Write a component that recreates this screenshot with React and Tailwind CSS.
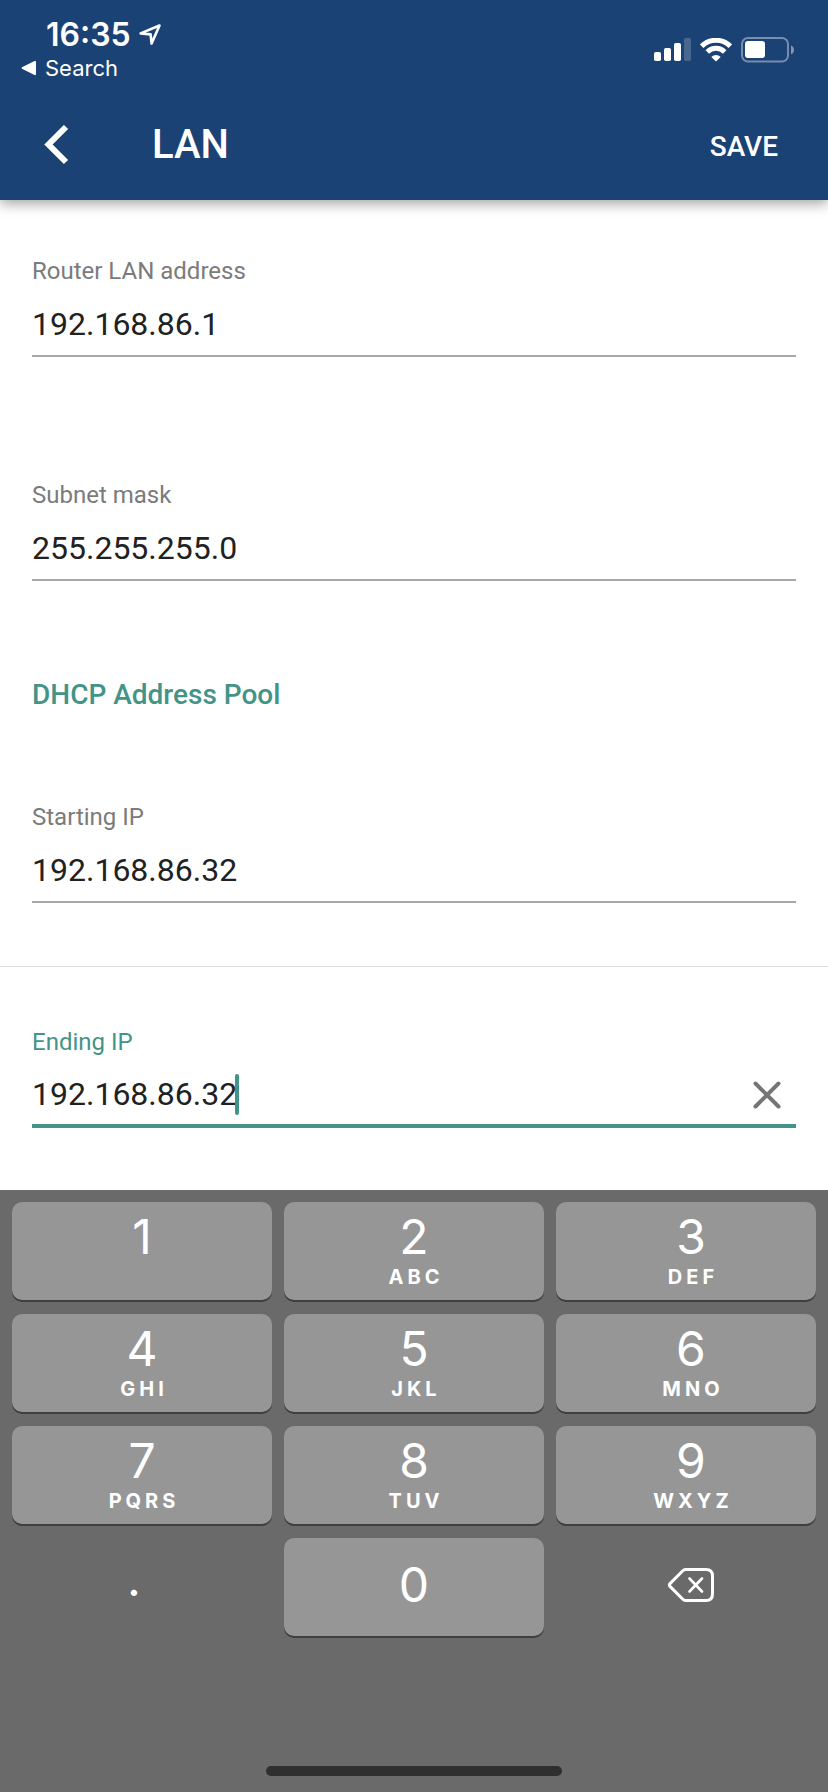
import React, { useState } from "react";

const keys = [
  { digit: "1", letters: "" },
  { digit: "2", letters: "ABC" },
  { digit: "3", letters: "DEF" },
  { digit: "4", letters: "GHI" },
  { digit: "5", letters: "JKL" },
  { digit: "6", letters: "MNO" },
  { digit: "7", letters: "PQRS" },
  { digit: "8", letters: "TUV" },
  { digit: "9", letters: "WXYZ" },
];

const LocationIcon = () => (
  <svg width="24" height="24" viewBox="0 0 24 24" fill="none">
    <path
      d="M21.5 2.5 L13.6 20.6 L12.6 11.4 L2.6 10.4 Z"
      stroke="white"
      strokeWidth="2.6"
      strokeLinejoin="round"
    />
  </svg>
);

const SignalIcon = () => (
  <svg width="37" height="24" viewBox="0 0 37 24" fill="white">
    <rect x="0" y="14" width="7" height="9" rx="1.8" />
    <rect x="10" y="10" width="7" height="13" rx="1.8" />
    <rect x="20" y="5" width="7" height="18" rx="1.8" />
    <rect x="30" y="0" width="7" height="23" rx="1.8" opacity="0.2" />
  </svg>
);

const WifiIcon = () => (
  <svg width="32" height="24" viewBox="0 0 32 24" fill="none">
    <path d="M1.6 8.2 A20.4 20.4 0 0 1 30.4 8.2" stroke="white" strokeWidth="5" />
    <path d="M7.3 13.9 A12.3 12.3 0 0 1 24.7 13.9" stroke="white" strokeWidth="5" />
    <path d="M16 23.6 L11.3 18.9 A6.7 6.7 0 0 1 20.7 18.9 Z" fill="white" />
  </svg>
);

const BatteryIcon = () => (
  <svg width="54" height="26" viewBox="0 0 54 26" fill="none">
    <rect x="1" y="1" width="46" height="23.6" rx="6" stroke="white" strokeOpacity="0.4" strokeWidth="2" />
    <path d="M50 8.4 C54 9.6 54 16 50 17.2 Z" fill="white" fillOpacity="0.45" />
    <rect x="4" y="4" width="20" height="17" rx="3" fill="white" />
  </svg>
);

const BackspaceIcon = () => (
  <svg width="48" height="36" viewBox="0 0 48 36" fill="none" stroke="white" strokeLinecap="round" strokeLinejoin="round">
    <path
      d="M18.5 2.5 H39 Q45.5 2.5 45.5 9 V27 Q45.5 33.5 39 33.5 H18.5 Q17 33.5 15.8 32.3 L3 19.4 Q1.8 18 3 16.6 L15.8 3.7 Q17 2.5 18.5 2.5 Z"
      strokeWidth="3"
    />
    <path d="M22.5 11.5 L35 24.5 M35 11.5 L22.5 24.5" strokeWidth="2.6" />
  </svg>
);

const Field = ({ id, label, value, onChange, active, onClear }) => {
  return (
    <div>
      <label
        htmlFor={id}
        className={
          active
            ? "block text-[24px] leading-7 text-[#439488]"
            : "block text-[24px] leading-7 text-[#7b7b7b]"
        }
      >
        {label}
      </label>
      <div
        className={
          active
            ? "relative mt-2 flex h-16 items-center border-b-4 border-[#439488]"
            : "relative mt-2 flex h-16 items-center border-b-2 border-[#a8a8a8]"
        }
      >
        <input
          id={id}
          type="text"
          inputMode="decimal"
          value={value}
          onChange={(e) => onChange(e.target.value)}
          className="h-10 w-full min-w-0 bg-transparent text-[32px] leading-10 text-[#212121] outline-none"
        />
        {active && (
          <>
            <span className="absolute left-[203px] h-[41px] w-1 rounded-sm bg-[#439488]" />
            <button type="button" aria-label="Clear" onClick={onClear} className="mr-[14px] shrink-0">
              <svg width="30" height="30" viewBox="0 0 30 30" stroke="#757575" strokeWidth="4" strokeLinecap="round">
                <path d="M3.5 4.5 L26.5 27.5 M26.5 4.5 L3.5 27.5" />
              </svg>
            </button>
          </>
        )}
      </div>
    </div>
  );
};

const Keyboard = ({ onKey, onDelete }) => {
  return (
    <div className="bg-[#6a6a6a] px-3 pt-3 pb-4 text-white font-['Inter',sans-serif]">
      <div className="grid grid-cols-3 gap-x-3 gap-y-[14px]">
        {keys.map((key) => (
          <button
            key={key.digit}
            type="button"
            onClick={() => onKey(key.digit)}
            className="flex h-[98px] flex-col items-center rounded-[10px] bg-[#969696] pt-[9px] shadow-[0_2px_0_#3f3f3f] nth-[3n]:pl-[10px]"
          >
            <span className="text-[48px] leading-[52px]">{key.digit}</span>
            <span className="pl-1 text-[20px] leading-7 font-bold tracking-[4px]">
              {key.letters}
            </span>
          </button>
        ))}
        <button type="button" onClick={() => onKey(".")} className="h-[98px] pr-4 pb-4 text-[48px] leading-[52px]">
          .
        </button>
        <button
          type="button"
          onClick={() => onKey("0")}
          className="h-[98px] rounded-[10px] bg-[#969696] pb-1 text-[48px] leading-[52px] shadow-[0_2px_0_#3f3f3f]"
        >
          0
        </button>
        <button
          type="button"
          aria-label="Delete"
          onClick={onDelete}
          className="flex h-[98px] items-center justify-center pb-1 pl-[10px]"
        >
          <BackspaceIcon />
        </button>
      </div>
      <div className="mx-auto mt-[130px] h-[10px] w-[296px] rounded-full bg-[#2f2f2f]" />
    </div>
  );
};

const App = () => {
  const [lan, setLan] = useState("192.168.86.1");
  const [mask, setMask] = useState("255.255.255.0");
  const [start, setStart] = useState("192.168.86.32");
  const [end, setEnd] = useState("192.168.86.32");

  return (
    <div className="flex min-h-screen flex-col bg-white font-['Roboto',sans-serif]">
      <header className="relative bg-[#1b4274] pb-[15px] text-white shadow-[0_4px_12px_rgba(0,0,0,0.35)]">
        <div className="flex justify-between pt-4 pr-[33px] pl-5 font-['Inter',sans-serif]">
          <div>
            <div className="flex items-center gap-[7px] pl-[26px]">
              <span className="text-[32px] leading-[38px] font-semibold">16:35</span>
              <LocationIcon />
            </div>
            <a href="#" className="flex items-center gap-2 text-[22px] leading-7">
              <svg width="17" height="16" viewBox="0 0 17 16" fill="white">
                <path d="M14.5 1 Q16 0.5 16 2 V14 Q16 15.5 14.5 15 L2 8.8 Q1 8 2 7.2 Z" />
              </svg>
              Search
            </a>
          </div>
          <div className="mt-[21px] flex h-[26px] items-center gap-[9px]">
            <SignalIcon />
            <WifiIcon />
            <BatteryIcon />
          </div>
        </div>
        <div className="mt-[23px] flex h-20 items-center pr-[50px] pl-11">
          <button type="button" aria-label="Back">
            <svg width="26" height="40" viewBox="0 0 26 40" fill="none" stroke="white" strokeWidth="6">
              <path d="M22 2 L4.5 19.5 L22 37" />
            </svg>
          </button>
          <h1 className="ml-[82px] text-[40px] leading-[48px] font-medium">LAN</h1>
          <button type="button" className="ml-auto pt-1 text-[28px] leading-8 font-medium">
            SAVE
          </button>
        </div>
      </header>

      <form className="flex-1">
        <div className="px-8 pt-[57px] pb-[63px]">
          <Field id="lan" label="Router LAN address" value={lan} onChange={setLan} />
          <div className="mt-[124px]">
            <Field id="mask" label="Subnet mask" value={mask} onChange={setMask} />
          </div>
          <h2 className="mt-[98px] text-[28px] leading-8 font-medium text-[#439488]">
            DHCP Address Pool
          </h2>
          <div className="mt-[92px]">
            <Field id="start" label="Starting IP" value={start} onChange={setStart} />
          </div>
        </div>
        <div className="border-t border-[#dedede] px-8 pt-[61px] pb-[62px]">
          <Field
            id="end"
            label="Ending IP"
            value={end}
            onChange={setEnd}
            active
            onClear={() => setEnd("")}
          />
        </div>
      </form>

      <Keyboard
        onKey={(k) => setEnd(end + k)}
        onDelete={() => setEnd(end.slice(0, -1))}
      />
    </div>
  );
};

export default App;
